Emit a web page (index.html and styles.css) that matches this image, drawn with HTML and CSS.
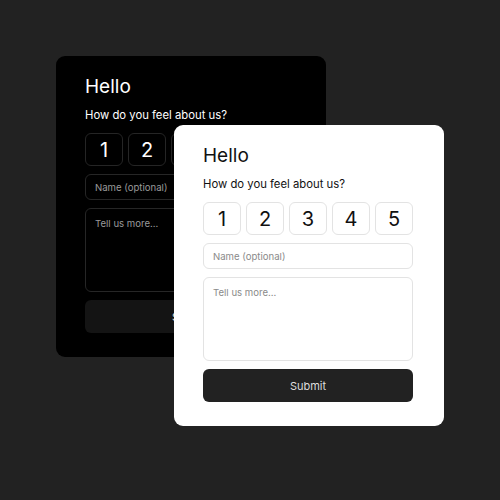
FILE: index.html
```html
<!DOCTYPE html>
<html lang="en">
<head>
    <meta charset="UTF-8">
    <meta name="viewport" content="width=device-width, initial-scale=1.0">
    <title>Feedback Cards</title>
    <link rel="stylesheet" href="styles.css">
</head>
<body>
    <div class="stage">
        <div class="card card-dark">
            <h1>Hello</h1>
            <p class="question">How do you feel about us?</p>
            <div class="rating">
                <button type="button">1</button>
                <button type="button">2</button>
                <button type="button">3</button>
                <button type="button">4</button>
                <button type="button">5</button>
            </div>
            <input type="text" class="field" placeholder="Name (optional)">
            <textarea class="field message" placeholder="Tell us more..."></textarea>
            <button type="button" class="submit-btn">Submit</button>
        </div>

        <div class="card card-light">
            <h1>Hello</h1>
            <p class="question">How do you feel about us?</p>
            <div class="rating">
                <button type="button">1</button>
                <button type="button">2</button>
                <button type="button">3</button>
                <button type="button">4</button>
                <button type="button">5</button>
            </div>
            <input type="text" class="field" placeholder="Name (optional)">
            <textarea class="field message" placeholder="Tell us more..."></textarea>
            <button type="button" class="submit-btn">Submit</button>
        </div>
    </div>
</body>
</html>
```

FILE: styles.css
```css
/* Page */
body {
    margin: 0;
    background: #222222;
    font-family: Inter, "Noto Sans", sans-serif;
}

.stage {
    position: relative;
    box-sizing: border-box;
    height: 500px;
    padding: 56px;
}

/* Card */
.card {
    box-sizing: border-box;
    width: 270px;
    height: 301px;
    padding: 19px 31px 0 29px;
    border-radius: 9px;
    display: flex;
    flex-direction: column;
}

.card h1 {
    margin: 0;
    font-size: 19px;
    line-height: 24px;
    font-weight: 400;
}

.question {
    margin: 8px 0 0;
    font-size: 11.3px;
    line-height: 16px;
}

/* Rating buttons */
.rating {
    display: grid;
    grid-template-columns: repeat(5, 1fr);
    gap: 5px;
    margin-top: 10px;
}

.rating button {
    height: 33px;
    padding: 0;
    border-radius: 6px;
    font-family: inherit;
    font-size: 20px;
    font-weight: 400;
}

/* Inputs */
.field {
    box-sizing: border-box;
    width: 100%;
    margin: 8px 0 0;
    padding: 0 9px;
    height: 26px;
    border-radius: 6px;
    font-family: inherit;
    font-size: 9.6px;
    outline: none;
}

.message {
    height: 84px;
    padding-top: 9px;
    resize: none;
}

/* Submit */
.submit-btn {
    margin-top: 8px;
    height: 33px;
    border: none;
    border-radius: 6px;
    font-family: inherit;
    font-size: 11px;
}

/* Dark variant */
.card-dark {
    background: #000000;
    color: #ffffff;
}

.card-dark .rating button {
    background: #000000;
    border: 1px solid #252525;
    color: #ffffff;
}

.card-dark .field {
    background: #000000;
    border: 1px solid #262626;
    color: #ffffff;
}

.card-dark .field::placeholder {
    color: #9a9a9a;
}

.card-dark .submit-btn {
    background: #141414;
    color: #e0e0e0;
}

/* Light variant, laid over the dark one */
.card-light {
    position: absolute;
    left: 174px;
    top: 125px;
    background: #ffffff;
    color: #111111;
}

.card-light .rating button {
    background: #ffffff;
    border: 1px solid #e3e3e3;
    color: #111111;
}

.card-light .field {
    background: #ffffff;
    border: 1px solid #e3e3e3;
    color: #111111;
}

.card-light .field::placeholder {
    color: #8a8a8a;
}

.card-light .submit-btn {
    background: #222222;
    color: #dddddd;
}
```
